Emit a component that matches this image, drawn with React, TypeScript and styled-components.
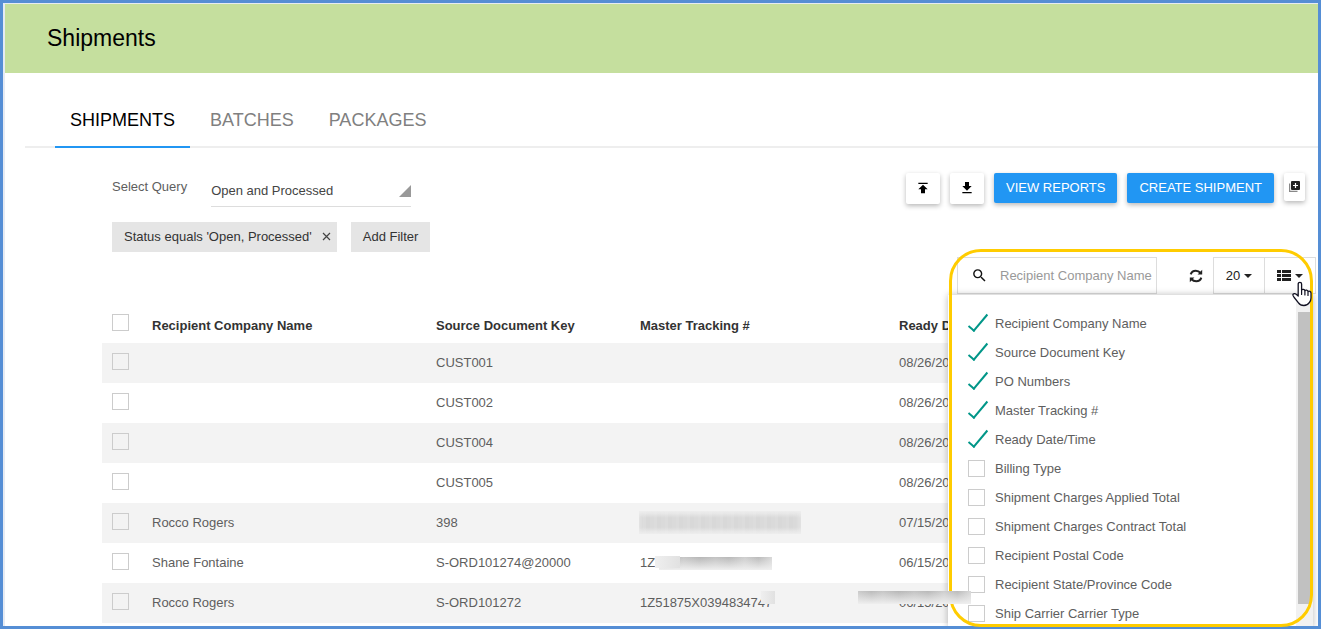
import React from "react";
import styled, { createGlobalStyle, css } from "styled-components";
import { MdPublish, MdFileDownload, MdSearch } from "react-icons/md";

const GlobalStyle = createGlobalStyle`
  *, *::before, *::after { box-sizing: border-box; }
  body {
    margin: 0;
    background: #fff;
    color: #5e5e5e;
    font: 13px/20px "Liberation Sans", Arial, sans-serif;
  }
  button, input, select { font: inherit; color: inherit; margin: 0; }
`;

const Page = styled.div`
  position: relative;
`;

const Frame = styled.div`
  min-height: 100vh;
  padding: 1px 0 0 2px;
  border: 3px solid #558ed5;
  background: #e6ebf3;
  overflow: hidden;
`;

const Sheet = styled.div`
  background: #fff;
`;

const Header = styled.header`
  display: flex;
  align-items: center;
  height: 69px;
  padding: 0 42px 2px;
  background: #c5df9e;
`;

const Title = styled.h1`
  margin: 0;
  color: #000;
  font-size: 23px;
  font-weight: 400;
  line-height: 28px;
`;

const Tabs = styled.nav`
  display: flex;
  gap: 5px;
  margin-left: 20px;
  padding-left: 30px;
  box-shadow: inset 0 -2px #eee;
`;

const Tab = styled.a<{ $active?: boolean }>`
  padding: 37px 15px 16px;
  border-bottom: 2px solid ${(p) => (p.$active ? "#2196f3" : "transparent")};
  color: ${(p) => (p.$active ? "#000" : "#808080")};
  font-size: 18px;
  text-decoration: none;
`;

const Main = styled.main`
  padding: 25px 0 3px 97px;
`;

const QueryBar = styled.div`
  display: flex;
  justify-content: space-between;
  align-items: flex-start;
  padding: 0 13px 0 10px;
`;

const QueryField = styled.div`
  display: flex;
  gap: 24px;
`;

const QueryLabel = styled.label`
  line-height: 28px;
`;

const SelectBox = styled.div`
  position: relative;
  width: 200px;

  &::after {
    content: "";
    position: absolute;
    right: 0;
    top: 12px;
    border-left: 12px solid transparent;
    border-bottom: 12px solid #999;
    pointer-events: none;
  }
`;

const Select = styled.select`
  display: block;
  width: 100%;
  height: 34px;
  padding: 2px 0 0;
  border: 0;
  border-bottom: 1px solid #ddd;
  border-radius: 0;
  background: transparent;
  color: #444;
  appearance: none;
`;

const Actions = styled.div`
  display: flex;
  align-items: flex-start;
  gap: 10px;
`;

const raised = css`
  border: 0;
  border-radius: 2px;
  box-shadow: 0 2px 5px rgba(0, 0, 0, 0.28);
  cursor: pointer;
`;

const IconButton = styled.button<{ $small?: boolean }>`
  ${raised}
  display: flex;
  justify-content: center;
  align-items: center;
  width: ${(p) => (p.$small ? 21 : 34)}px;
  height: ${(p) => (p.$small ? 28 : 31)}px;
  padding: 0 0 2px;
  background: #fff;
  color: #000;
`;

const PrimaryButton = styled.button`
  ${raised}
  height: 30px;
  padding: 0 12px;
  background: #2196f3;
  color: #fff;
`;

const Filters = styled.div`
  display: flex;
  gap: 14px;
  margin-top: 15px;
  padding-left: 10px;
`;

const Chip = styled.div`
  display: flex;
  align-items: center;
  gap: 10px;
  height: 30px;
  padding: 0 6px 1px 12px;
  background: #e5e5e5;
  color: #333;
`;

const ChipClose = styled.button`
  display: flex;
  padding: 0;
  border: 0;
  background: none;
  cursor: pointer;
`;

const AddFilter = styled.button`
  height: 30px;
  padding: 0 12px 1px;
  border: 0;
  background: #e5e5e5;
  color: #333;
  cursor: pointer;
`;

const GridTools = styled.div`
  position: relative;
  display: flex;
  justify-content: flex-end;
  margin-top: 5px;
  padding-right: 2px;
`;

const SearchBox = styled.label`
  display: flex;
  align-items: center;
  gap: 12px;
  width: 200px;
  height: 37px;
  margin-right: 20px;
  padding-left: 13px;
  border: 1px solid #ddd;
  color: #111;
`;

const SearchInput = styled.input`
  flex: 1;
  min-width: 0;
  padding: 0;
  border: 0;
  outline: 0;
  background: none;

  &::placeholder { color: #999; opacity: 1; }
`;

const ToolButton = styled.button<{ $plain?: boolean }>`
  display: flex;
  justify-content: center;
  align-items: center;
  width: ${(p) => (p.$plain ? 37 : 52)}px;
  height: 37px;
  padding: 0;
  border: 1px solid ${(p) => (p.$plain ? "transparent" : "#ddd")};
  background: #fff;
  color: #222;
  cursor: pointer;

  & + & { margin-left: -1px; }
`;

const Caret = styled.span`
  margin-left: 4px;
  border: 4px solid transparent;
  border-top-color: #222;
  border-bottom: 0;
`;

const ColumnMenu = styled.div`
  position: absolute;
  z-index: 2;
  top: 100%;
  right: 5px;
  display: flex;
  width: 365px;
  margin-top: 1px;
  background: #fff;
  box-shadow: 0 0 7px rgba(0, 0, 0, 0.28);
`;

const ColumnList = styled.ul`
  flex: 1;
  margin: 0;
  padding: 14px 0 0 20px;
  list-style: none;
`;

const ColumnOption = styled.label`
  display: flex;
  align-items: center;
  gap: 10px;
  height: 29px;
`;

const ScrollTrack = styled.div`
  width: 17px;
  padding: 17px 2px 24px;
  background: #f1f1f1;
`;

const ScrollThumb = styled.div`
  height: 100%;
  background: #c1c1c1;
`;

const Check = styled.input.attrs({ type: "checkbox" })`
  position: relative;
  flex: none;
  display: block;
  width: 17px;
  height: 17px;
  border: 1px solid #ccc;
  appearance: none;

  &:checked { border-color: transparent; }
  &:checked::after {
    content: "";
    position: absolute;
    left: -3px;
    top: -6px;
    width: 8px;
    height: 22px;
    border: solid #009688;
    border-width: 0 2px 2px 0;
    transform: rotate(40deg);
    transform-origin: 100% 100%;
  }
`;

const Table = styled.table`
  width: calc(100% - 13px);
  margin-top: 9px;
  border-collapse: collapse;
  table-layout: fixed;
`;

const Col = styled.col<{ $w?: number }>`
  width: ${(p) => (p.$w ? `${p.$w}px` : "auto")};
`;

const HeadCell = styled.th`
  height: 40px;
  padding: 5px 10px 0;
  color: #333;
  text-align: left;
  white-space: nowrap;

  &:first-child { padding: 0 10px 2px; }
`;

const Row = styled.tr`
  &:nth-child(odd) { background: #f3f3f3; }
`;

const Cell = styled.td`
  position: relative;
  height: 40px;
  padding: 0 10px;
  white-space: nowrap;

  &:first-child { padding-bottom: 3px; }
`;

/* A pixelated smear that hides confidential values */
const Redaction = styled.span<{ $x: number; $y: number; $w: number; $h: number; $tone: "soft" | "light" | "dark" }>`
  position: absolute;
  z-index: 5;
  left: ${(p) => p.$x}px;
  top: ${(p) => p.$y}px;
  width: ${(p) => p.$w}px;
  height: ${(p) => p.$h}px;
  ${(p) =>
    p.$tone === "soft" &&
    css`
      background:
        linear-gradient(#ededed, transparent 30%, transparent 70%, #ededed),
        repeating-linear-gradient(90deg, #dadada 0 4px, #dcdcdc 4px 7px, #d8d8d8 7px 11px);
      box-shadow: inset 0 0 5px #eee;
    `}
  ${(p) =>
    p.$tone === "light" &&
    css`
      background: linear-gradient(90deg, #efefef, #e1e1e1);
    `}
  ${(p) =>
    p.$tone === "dark" &&
    css`
      background:
        linear-gradient(rgba(238, 238, 238, 0), rgba(238, 238, 238, 0.5) 50%, #efefef),
        linear-gradient(90deg, #cacaca, #bababa 12%, #c6c6c6 22%, #b6b6b6 36%, #c2c2c2 50%, #b8b8b8 62%, #cecece 76%, #bababa 88%, #d8d8d8);
    `}
`;

const Highlight = styled.div`
  position: absolute;
  z-index: 4;
  top: 249px;
  right: 8px;
  bottom: 2px;
  width: 364px;
  border: 3px solid #fc0;
  border-radius: 32px;
  pointer-events: none;
`;

const Pointer = styled.svg`
  position: absolute;
  z-index: 6;
  top: 281px;
  right: 9px;
`;

type Smear = React.ComponentProps<typeof Redaction>;
type Shipment = {
  name?: string;
  key: string;
  tracking?: string;
  date: string;
  trackingSmears?: Smear[];
  dateSmears?: Smear[];
};

const shipments: Shipment[] = [
  { key: "CUST001", date: "08/26/2021" },
  { key: "CUST002", date: "08/26/2021" },
  { key: "CUST004", date: "08/26/2021" },
  { key: "CUST005", date: "08/26/2021" },
  {
    name: "Rocco Rogers",
    key: "398",
    date: "07/15/2021",
    trackingSmears: [{ $x: 9, $y: 8, $w: 162, $h: 23, $tone: "soft" }],
  },
  {
    name: "Shane Fontaine",
    key: "S-ORD101274@20000",
    tracking: "1Z",
    date: "06/15/2021",
    trackingSmears: [
      { $x: 29, $y: 14, $w: 113, $h: 13, $tone: "dark" },
      { $x: 25, $y: 13, $w: 25, $h: 12, $tone: "light" },
    ],
  },
  {
    name: "Rocco Rogers",
    key: "S-ORD101272",
    tracking: "1Z51875X0394834747",
    date: "06/15/2021",
    trackingSmears: [{ $x: 131, $y: 8, $w: 14, $h: 13, $tone: "light" }],
    dateSmears: [{ $x: -31, $y: 8, $w: 113, $h: 13, $tone: "dark" }],
  },
];

const columns = [
  { label: "Recipient Company Name", on: true },
  { label: "Source Document Key", on: true },
  { label: "PO Numbers", on: true },
  { label: "Master Tracking #", on: true },
  { label: "Ready Date/Time", on: true },
  { label: "Billing Type", on: false },
  { label: "Shipment Charges Applied Total", on: false },
  { label: "Shipment Charges Contract Total", on: false },
  { label: "Recipient Postal Code", on: false },
  { label: "Recipient State/Province Code", on: false },
  { label: "Ship Carrier Carrier Type", on: false },
];

const RefreshIcon = () => (
  <svg width="14" height="14" viewBox="0 0 14 14" fill="none" stroke="currentColor" strokeWidth="2" aria-hidden>
    <path d="M1.700 5.400C2.500 2.800 4.500 1.800 6.800 1.800S10.400 2.600 11.600 4" />
    <path d="M12.300 8.600C11.500 11.200 9.500 12.200 7.200 12.200S3.600 11.400 2.400 10" />
    <path d="M13.200 .8v4.800H8.600z" fill="currentColor" stroke="none" />
    <path d="M.8 13.200V8.400h4.600z" fill="currentColor" stroke="none" />
  </svg>
);

const ListIcon = () => (
  <svg width="14" height="12" viewBox="0 0 14 12" fill="currentColor" aria-hidden>
    <path d="M0 0h4v3H0zM5 0h9v3H5zM0 4h4v3H0zM5 4h9v3H5zM0 8h4v3H0zM5 8h9v3H5z" />
  </svg>
);

const LibraryAddIcon = () => (
  <svg width="11" height="11" viewBox="0 0 11 11" aria-hidden>
    <path d="M.6 2.500v7.900h7.900" fill="none" stroke="#888" strokeWidth="1.200" />
    <rect x="2" width="9" height="9" rx="1" fill="#222" />
    <path d="M6.500 2v5M4 4.500h5" stroke="#fff" strokeWidth="1.200" />
  </svg>
);

const CloseIcon = () => (
  <svg width="9" height="9" viewBox="0 0 9 9" stroke="#444" strokeWidth="1.2" aria-hidden>
    <path d="M1 1l7 7M8 1L1 8" />
  </svg>
);

const HandPointer = () => (
  <Pointer width="20" height="26" viewBox="0 0 20 26" aria-hidden>
    <path
      d="M6.200 15V3a1.700 1.700 0 0 1 3.400 0v6c.6-1 3-1 3.300.6.700-.9 2.900-.6 3.100.9.900-.8 3-.2 3 1.400V17c0 2-.6 3.200-1.500 4.400-1.300 2-3.300 3.100-5.600 3.100-2.400 0-4.300-.9-5.400-2.700L2.200 16.500c-.8-1.200-1.900-2.300-1.100-3.300.9-1 2.500-.6 3.400.4z"
      fill="#fff"
      stroke="#112"
      strokeWidth="1.3"
      strokeLinejoin="round"
    />
    <path d="M9.600 9v4.500M12.900 10v4M16 11v3.500" stroke="#112" strokeWidth="1.200" strokeLinecap="round" />
  </Pointer>
);

export default function App() {
  return (
    <Page>
      <GlobalStyle />
      <Frame>
        <Sheet>
          <Header>
            <Title>Shipments</Title>
          </Header>
          <Tabs>
            <Tab href="#shipments" $active>SHIPMENTS</Tab>
            <Tab href="#batches">BATCHES</Tab>
            <Tab href="#packages">PACKAGES</Tab>
          </Tabs>
          <Main>
            <QueryBar>
              <QueryField>
                <QueryLabel htmlFor="query">Select Query</QueryLabel>
                <SelectBox>
                  <Select id="query">
                    <option>Open and Processed</option>
                  </Select>
                </SelectBox>
              </QueryField>
              <Actions>
                <IconButton aria-label="Import"><MdPublish size={16} /></IconButton>
                <IconButton aria-label="Export"><MdFileDownload size={16} /></IconButton>
                <PrimaryButton>VIEW REPORTS</PrimaryButton>
                <PrimaryButton>CREATE SHIPMENT</PrimaryButton>
                <IconButton $small aria-label="Add to library"><LibraryAddIcon /></IconButton>
              </Actions>
            </QueryBar>

            <Filters>
              <Chip>
                Status equals 'Open, Processed'
                <ChipClose aria-label="Remove filter"><CloseIcon /></ChipClose>
              </Chip>
              <AddFilter>Add Filter</AddFilter>
            </Filters>

            <GridTools>
              <SearchBox>
                <MdSearch size={17} />
                <SearchInput type="text" aria-label="Search" placeholder="Recipient Company Name" />
              </SearchBox>
              <ToolButton $plain aria-label="Refresh"><RefreshIcon /></ToolButton>
              <ToolButton>20<Caret /></ToolButton>
              <ToolButton aria-label="Columns"><ListIcon /><Caret /></ToolButton>
              <ColumnMenu>
                <ColumnList>
                  {columns.map((c) => (
                    <li key={c.label}>
                      <ColumnOption>
                        <Check defaultChecked={c.on} />
                        {c.label}
                      </ColumnOption>
                    </li>
                  ))}
                </ColumnList>
                <ScrollTrack><ScrollThumb /></ScrollTrack>
              </ColumnMenu>
            </GridTools>

            <Table>
              <colgroup>
                <Col $w={40} />
                <Col $w={284} />
                <Col $w={204} />
                <Col $w={259} />
                <Col />
              </colgroup>
              <thead>
                <tr>
                  <HeadCell><Check aria-label="Select all" /></HeadCell>
                  <HeadCell>Recipient Company Name</HeadCell>
                  <HeadCell>Source Document Key</HeadCell>
                  <HeadCell>Master Tracking #</HeadCell>
                  <HeadCell>Ready Date/Time</HeadCell>
                </tr>
              </thead>
              <tbody>
                {shipments.map((s) => (
                  <Row key={s.key}>
                    <Cell><Check aria-label={`Select ${s.key}`} /></Cell>
                    <Cell>{s.name}</Cell>
                    <Cell>{s.key}</Cell>
                    <Cell>
                      {s.tracking}
                      {s.trackingSmears?.map((r, i) => <Redaction key={i} {...r} />)}
                    </Cell>
                    <Cell>
                      {s.date}
                      {s.dateSmears?.map((r, i) => <Redaction key={i} {...r} />)}
                    </Cell>
                  </Row>
                ))}
              </tbody>
            </Table>
          </Main>
        </Sheet>
      </Frame>
      <Highlight />
      <HandPointer />
    </Page>
  );
}
